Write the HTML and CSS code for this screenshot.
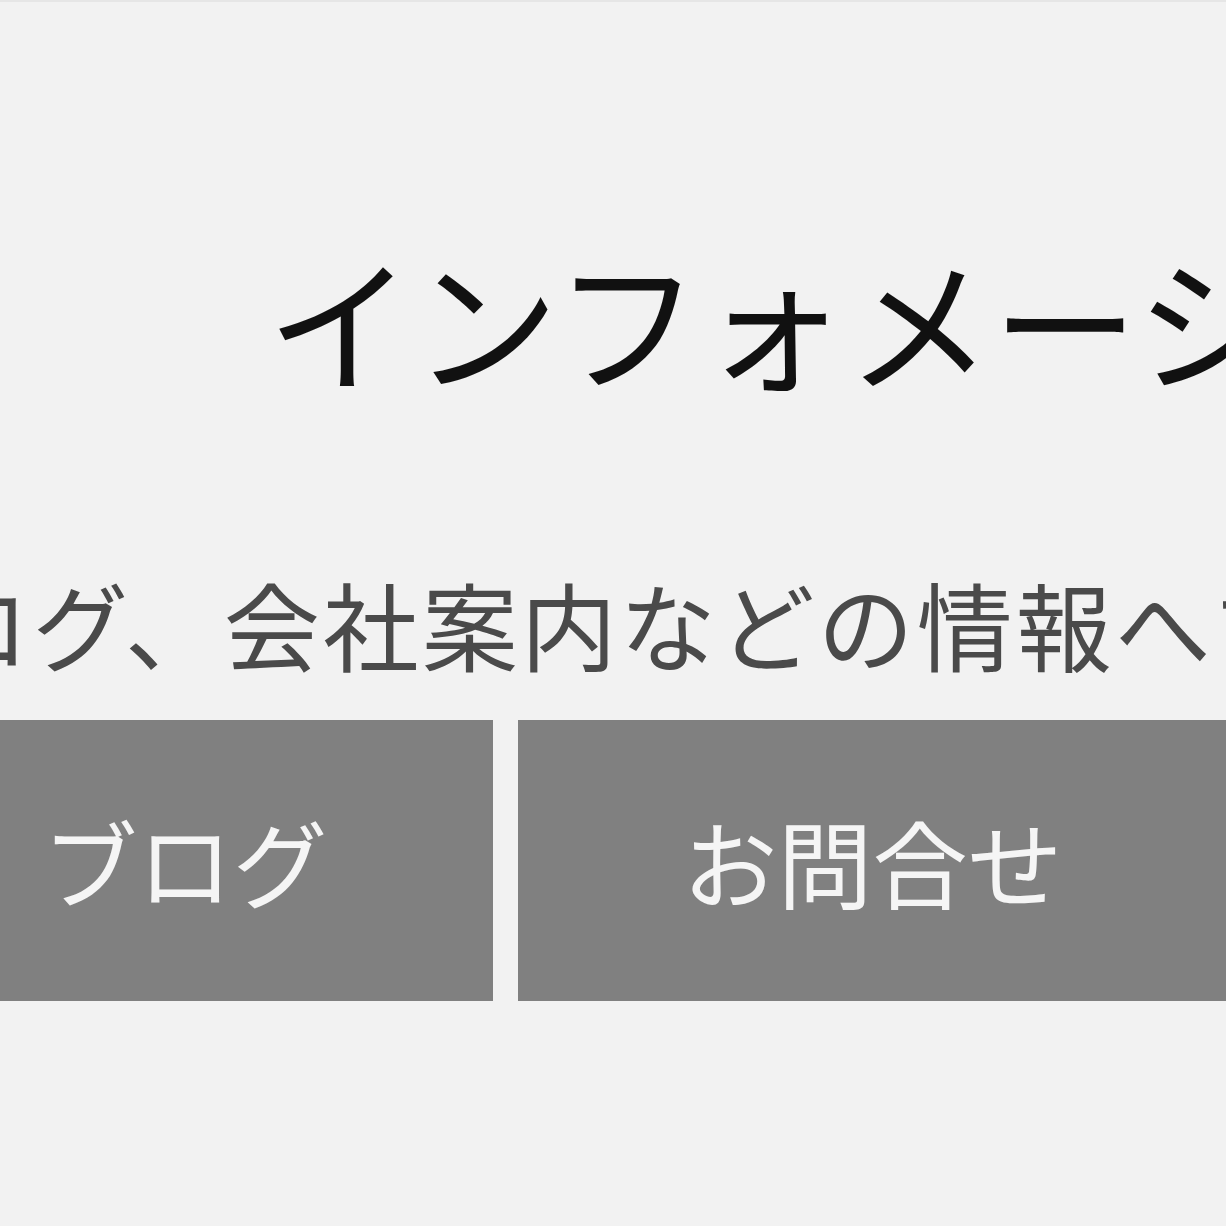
FILE: index.html
```html
<!DOCTYPE html>
<html lang="ja">
<head>
  <meta charset="UTF-8">
  <meta name="viewport" content="width=device-width, initial-scale=1.0">
  <title>インフォメーション</title>
  <link rel="stylesheet" href="styles.css">
</head>
<body>
  <section class="info">
    <h2 class="info-title">インフォメーション</h2>
    <p class="info-lead">ブログ、会社案内などの情報へすぐ移動できます</p>

    <nav class="info-links">
      <a class="info-btn" href="#blog">ブログ</a>
      <a class="info-btn" href="#contact">お問合せ</a>
      <a class="info-btn" href="#company">会社案内</a>
    </nav>
  </section>
</body>
</html>
```

FILE: styles.css
```css
html, body {
  margin: 0;
  padding: 0;
}

body {
  background-color: #f2f2f2;
  font-family: "Noto Sans CJK JP", "Noto Sans", sans-serif;
  border-top: 2px solid #e6e6e6;
  overflow: hidden;
  height: 1224px;
}

.info {
  display: flex;
  flex-direction: column;
  align-items: center;
  width: 1840px;
  padding-top: 243px;
}

.info-title {
  margin: 0;
  font-size: 146px;
  font-weight: 400;
  line-height: 1;
  color: #111;
  white-space: nowrap;
}

.info-lead {
  margin: 184px 0 0;
  font-size: 96px;
  line-height: 1;
  letter-spacing: 3px;
  color: #4a4a4a;
  white-space: nowrap;
}

.info-links {
  display: flex;
  gap: 25px;
  margin-top: 49px;
}

.info-btn {
  display: flex;
  align-items: center;
  justify-content: center;
  height: 281px;
  padding: 0 165px;
  background-color: #808080;
  color: #f5f5f5;
  font-size: 95px;
  text-decoration: none;
  white-space: nowrap;
}
```
